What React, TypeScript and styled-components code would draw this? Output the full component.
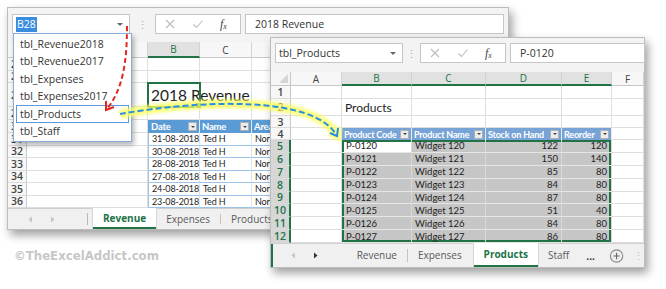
import React from "react";
import styled, { createGlobalStyle } from "styled-components";

const UI = '"Open Sans", "Liberation Sans", sans-serif';
const CELL = 'Lato, "Liberation Sans", sans-serif';
const GREEN = "#217346";

const dates = ["31-08-2018", "30-08-2018", "28-08-2018", "27-08-2018", "24-08-2018", "23-08-2018"];

const products = [
  ["P-0120", "Widget 120", "122", "120"],
  ["P-0121", "Widget 121", "150", "140"],
  ["P-0122", "Widget 122", "85", "80"],
  ["P-0123", "Widget 123", "84", "80"],
  ["P-0124", "Widget 124", "87", "80"],
  ["P-0125", "Widget 125", "51", "40"],
  ["P-0126", "Widget 126", "84", "80"],
  ["P-0127", "Widget 127", "86", "80"],
];

const names = ["tbl_Revenue2018", "tbl_Revenue2017", "tbl_Expenses", "tbl_Expenses2017", "tbl_Products", "tbl_Staff"];

const Blank = ({ count }: { count: number }) => (
  <>
    {Array.from({ length: count }, (_, i) => (
      <GridCell key={i} />
    ))}
  </>
);

const FormulaIcons = () => (
  <FxBox>
    <svg width="12" height="12" viewBox="0 0 12 12">
      <path d="M2 2 L10 10 M10 2 L2 10" stroke="#bcbcbc" strokeWidth="1.1" />
    </svg>
    <svg width="12" height="12" viewBox="0 0 12 12">
      <path d="M1.5 6.5 L4.5 9.5 L10.5 2.5" stroke="#bcbcbc" strokeWidth="1.1" fill="none" />
    </svg>
    <FxText>
      f<sub>x</sub>
    </FxText>
  </FxBox>
);

const NavArrows = ({ nextOn }: { nextOn?: boolean }) => (
  <>
    <svg width="5" height="7" viewBox="0 0 5 7">
      <path d="M4 0.5 L0.5 3.5 L4 6.5 Z" fill="#c4c4c4" />
    </svg>
    <svg width="5" height="7" viewBox="0 0 5 7">
      <path d="M1 0.5 L4.5 3.5 L1 6.5 Z" fill={nextOn ? "#333" : "#c4c4c4"} />
    </svg>
  </>
);

const App = () => {
  return (
    <Desktop>
      <GlobalStyle />

      <Window $x={7} $y={7} $w={502} $h={223} $z={1}>
        <FormulaBar $pt={6}>
          <NameBox $w={118}>
            <Picked>B28</Picked>
            <DropArrow />
          </NameBox>
          <Dots $w={25}>⋮</Dots>
          <FormulaIcons />
          <FormulaInput $w={259}>2018 Revenue</FormulaInput>
        </FormulaBar>

        <Sheet
          $cols="19px 121px 52px 52px 52px 1fr"
          $rows="16px 12.5px 12.5px 24px 13px 13px repeat(6, 12.5px)"
        >
          <Corner />
          <ColHead>A</ColHead>
          <ColHead $sel>B</ColHead>
          <ColHead>C</ColHead>
          <ColHead>D</ColHead>
          <ColHead>E</ColHead>

          <RowHead>26</RowHead>
          <Blank count={5} />
          <RowHead>27</RowHead>
          <Blank count={5} />
          <RowHead>28</RowHead>
          <GridCell />
          <TitleCell $size={15.5} $active>
            2018 Revenue
          </TitleCell>
          <Blank count={3} />
          <RowHead>29</RowHead>
          <Blank count={5} />
          <RowHead>30</RowHead>
          <GridCell />
          {["Date", "Name", "Area"].map((h, i) => (
            <HeadCell key={h} $first={i === 0}>
              {h}
              <FilterBtn />
            </HeadCell>
          ))}
          <GridCell />
          {dates.map((d, i) => (
            <React.Fragment key={d}>
              <RowHead>{31 + i}</RowHead>
              <GridCell />
              <BodyCell $first>{d}</BodyCell>
              <BodyCell>Ted H</BodyCell>
              <BodyCell>North</BodyCell>
              <GridCell />
            </React.Fragment>
          ))}
        </Sheet>

        <TabBar>
          <NavArea $w={80} $sep>
            <NavArrows />
          </NavArea>
          <Gap $w={5} />
          <Tab $active>Revenue</Tab>
          <Tab>Expenses</Tab>
          <TabSep />
          <Tab>Products</Tab>
        </TabBar>

        <NameList>
          {names.map((n) => (
            <NameItem key={n} $sel={n === "tbl_Products"}>
              {n}
            </NameItem>
          ))}
        </NameList>
      </Window>

      <Window $x={270} $y={37} $w={375} $h={231} $z={2}>
        <FormulaBar $pt={5}>
          <NameBox $w={128}>
            tbl_Products
            <DropArrow />
          </NameBox>
          <Dots $w={17}>⋮</Dots>
          <FormulaIcons />
          <FormulaInput>P-0120</FormulaInput>
        </FormulaBar>

        <Sheet
          $cols="20px 51px 70px 74px 76px 50px 1fr"
          $rows="14px 13px 17px 12px 12px repeat(8, 12.875px)"
        >
          <Corner $tri />
          <ColHead>A</ColHead>
          <ColHead $sel>B</ColHead>
          <ColHead $sel>C</ColHead>
          <ColHead $sel>D</ColHead>
          <ColHead $sel>E</ColHead>
          <ColHead>F</ColHead>

          <RowHead>1</RowHead>
          <Blank count={6} />
          <RowHead>2</RowHead>
          <GridCell />
          <TitleCell $size={12}>Products</TitleCell>
          <Blank count={4} />
          <RowHead>3</RowHead>
          <Blank count={6} />
          <RowHead>4</RowHead>
          <GridCell />
          {["Product Code", "Product Name", "Stock on Hand", "Reorder"].map((h) => (
            <HeadCell key={h} $soft>
              {h}
              <FilterBtn />
            </HeadCell>
          ))}
          <GridCell />
          {products.map((p, i) => (
            <React.Fragment key={p[0]}>
              <RowHead $sel>{5 + i}</RowHead>
              <GridCell />
              {p.map((v, c) => (
                <PickCell
                  key={c}
                  $active={i === 0 && c === 0}
                  $right={c > 1}
                  $top={i === 0}
                  $bottom={i === products.length - 1}
                  $left={c === 0}
                  $end={c === 3}
                >
                  {v}
                </PickCell>
              ))}
              <GridCell />
            </React.Fragment>
          ))}
        </Sheet>

        <TabBar $edge>
          <NavArea $w={79}>
            <NavArrows nextOn />
          </NavArea>
          <Tab>Revenue</Tab>
          <TabSep />
          <Tab>Expenses</Tab>
          <Gap $w={2} />
          <Tab $active>Products</Tab>
          <Tab>Staff</Tab>
          <More>...</More>
          <svg width="16" height="16" viewBox="0 0 16 16">
            <circle cx="8" cy="8" r="6.5" fill="none" stroke="#8a8a8a" strokeWidth="1.2" />
            <path d="M8 4.5 V11.5 M4.5 8 H11.5" stroke="#6a6a6a" strokeWidth="1.3" />
          </svg>
          <Kebab>⋮</Kebab>
        </TabBar>
      </Window>

      <Watermark>©TheExcelAddict.com</Watermark>

      <Arrows width="666" height="289" viewBox="0 0 666 289">
        <defs>
          <filter id="glow" x="-10%" y="-50%" width="120%" height="200%">
            <feGaussianBlur stdDeviation="1.6" />
          </filter>
        </defs>
        <g filter="url(#glow)" opacity="0.8">
          <path d="M120 114 C 200 100, 315 95, 337 136" stroke="#fbff5e" strokeWidth="9" fill="none" />
          <path d="M338 128 L337 136 L330 133" stroke="#fbff5e" strokeWidth="8" fill="none" />
        </g>
        <path
          d="M120 114 C 200 100, 315 95, 337 136"
          stroke="#2a8ee0"
          strokeWidth="2"
          strokeDasharray="6 3"
          fill="none"
        />
        <path d="M338 128 L337 136 L330 133" stroke="#2a8ee0" strokeWidth="2" fill="none" />
        <path
          d="M127 26 C 127 65, 122 90, 107 109"
          stroke="#e3261d"
          strokeWidth="2"
          strokeDasharray="5 3"
          fill="none"
        />
        <path d="M106 101 L106 110 L114 107" stroke="#e3261d" strokeWidth="2" fill="none" />
      </Arrows>
    </Desktop>
  );
};

const GlobalStyle = createGlobalStyle`
  html, body {
    margin: 0;
    padding: 0;
    background: #fff;
  }
  * {
    box-sizing: border-box;
  }
`;

const Desktop = styled.div`
  position: relative;
  width: 666px;
  height: 289px;
  overflow: hidden;
  background: #fff;
`;

interface WindowProps {
  $x: number;
  $y: number;
  $w: number;
  $h: number;
  $z: number;
}

const Window = styled.div<WindowProps>`
  position: absolute;
  left: ${(p) => p.$x}px;
  top: ${(p) => p.$y}px;
  width: ${(p) => p.$w}px;
  height: ${(p) => p.$h}px;
  z-index: ${(p) => p.$z};
  display: flex;
  flex-direction: column;
  background: #fff;
  border: 1px solid #bdbdbd;
  box-shadow: 3px 5px 9px rgba(0, 0, 0, 0.38);
`;

const FormulaBar = styled.div<{ $pt: number }>`
  height: 34px;
  flex-shrink: 0;
  display: flex;
  align-items: flex-start;
  padding: ${(p) => p.$pt}px 0 0 4px;
  background: #f3f3f3;
  font-family: ${UI};
  font-size: 10.5px;
  color: #333;
`;

const NameBox = styled.div<{ $w: number }>`
  width: ${(p) => p.$w}px;
  height: 20px;
  display: flex;
  align-items: center;
  padding: 0 6px 0 3px;
  background: #fff;
  border: 1px solid #c6c6c6;
`;

const Picked = styled.span`
  background: #3b8ddf;
  color: #fff;
  padding: 1px 1px;
  line-height: 13px;
`;

const DropArrow = styled.span`
  margin-left: auto;
  width: 0;
  height: 0;
  border-left: 3px solid transparent;
  border-right: 3px solid transparent;
  border-top: 3px solid #666;
`;

const Dots = styled.div<{ $w: number }>`
  width: ${(p) => p.$w}px;
  height: 20px;
  display: flex;
  align-items: center;
  justify-content: center;
  color: #a8a8a8;
  font-size: 11px;
`;

const FxBox = styled.div`
  width: 86px;
  height: 20px;
  display: flex;
  align-items: center;
  justify-content: space-between;
  padding: 0 8px;
  background: #fff;
  border: 1px solid #c6c6c6;
`;

const FxText = styled.span`
  width: 12px;
  font-family: "Liberation Serif", serif;
  font-style: italic;
  font-size: 12px;
  color: #444;
  line-height: 1;

  sub {
    font-size: 8px;
    vertical-align: -1px;
  }
`;

const FormulaInput = styled.div<{ $w?: number }>`
  ${(p) => (p.$w ? `width: ${p.$w}px;` : "flex: 1; margin-right: -1px;")}
  margin-left: 4px;
  height: 20px;
  display: flex;
  align-items: center;
  padding-left: 9px;
  background: #fff;
  border: 1px solid #c6c6c6;
`;

const Sheet = styled.div<{ $cols: string; $rows: string }>`
  display: grid;
  grid-template-columns: ${(p) => p.$cols};
  grid-template-rows: ${(p) => p.$rows};
  flex-shrink: 0;
  background: #fff;
  font-family: ${CELL};
  font-size: 9.5px;
  color: #1e1e1e;
`;

const GridCell = styled.div`
  min-width: 0;
  overflow: hidden;
  white-space: nowrap;
  display: flex;
  align-items: center;
  padding: 0 2px;
  border-right: 1px solid #dedede;
  border-bottom: 1px solid #dedede;
`;

const Corner = styled.div<{ $tri?: boolean }>`
  position: relative;
  background: #f6f6f6;
  border-right: 1px solid #c8c8c8;
  border-bottom: 1px solid #c8c8c8;

  &::after {
    content: "";
    display: ${(p) => (p.$tri ? "block" : "none")};
    position: absolute;
    right: 2px;
    bottom: 2px;
    border-left: 9px solid transparent;
    border-bottom: 9px solid #d6d6d6;
  }
`;

const ColHead = styled.div<{ $sel?: boolean }>`
  display: flex;
  align-items: center;
  justify-content: center;
  font-family: ${UI};
  font-size: 10px;
  background: ${(p) => (p.$sel ? "#e1e1e1" : "#f7f7f7")};
  color: ${(p) => (p.$sel ? GREEN : "#444")};
  border-right: 1px solid #d2d2d2;
  border-bottom: ${(p) => (p.$sel ? `2px solid ${GREEN}` : "1px solid #c8c8c8")};
`;

const RowHead = styled.div<{ $sel?: boolean }>`
  display: flex;
  align-items: center;
  justify-content: center;
  font-family: ${UI};
  font-size: 10.5px;
  font-weight: 600;
  background: ${(p) => (p.$sel ? "#d6d6d6" : "#f7f7f7")};
  color: ${(p) => (p.$sel ? GREEN : "#444")};
  border-right: ${(p) => (p.$sel ? `2px solid ${GREEN}` : "1px solid #c8c8c8")};
  border-bottom: 1px solid #dadada;
`;

const TitleCell = styled(GridCell)<{ $size: number; $active?: boolean }>`
  position: relative;
  overflow: visible;
  font-size: ${(p) => p.$size}px;
  padding-left: 3px;
  ${(p) => (p.$active ? `outline: 2px solid ${GREEN}; outline-offset: -1px;` : "")}

  &::after {
    content: "";
    display: ${(p) => (p.$active ? "block" : "none")};
    position: absolute;
    right: -3px;
    bottom: -3px;
    width: 5px;
    height: 5px;
    background: ${GREEN};
    border: 1px solid #fff;
  }
`;

const HeadCell = styled(GridCell)<{ $first?: boolean; $soft?: boolean }>`
  background: ${(p) => (p.$soft ? "#77a3d6" : "#5b9bd5")};
  color: #fff;
  font-weight: 700;
  font-size: ${(p) => (p.$soft ? 9 : 9.5)}px;
  letter-spacing: -0.2px;
  border-right: 1px solid #e3ecf6;
  border-bottom: none;
  ${(p) => (p.$first ? "border-left: 1px solid #5b9bd5;" : "")}
`;

const FilterBtn = styled.span`
  margin-left: auto;
  flex-shrink: 0;
  width: 9px;
  height: 9px;
  display: flex;
  align-items: center;
  justify-content: center;
  background: #ececec;
  border: 1px solid #b0b0b0;

  &::after {
    content: "";
    border-left: 2px solid transparent;
    border-right: 2px solid transparent;
    border-top: 2px solid #444;
  }
`;

const BodyCell = styled(GridCell)<{ $first?: boolean }>`
  padding-left: 3px;
  font-size: 9px;
  letter-spacing: -0.15px;
  border-right: 1px solid #d6e5f4;
  border-bottom: 1px solid #9dc3e6;
  ${(p) => (p.$first ? "border-left: 1px solid #9dc3e6;" : "")}
`;

interface PickProps {
  $active?: boolean;
  $right?: boolean;
  $top?: boolean;
  $bottom?: boolean;
  $left?: boolean;
  $end?: boolean;
}

const frame = (p: PickProps) => {
  const s: string[] = [];
  if (p.$top) s.push(`inset 0 2px 0 ${GREEN}`);
  if (p.$bottom) s.push(`inset 0 -2px 0 ${GREEN}`);
  if (p.$left) s.push(`inset 2px 0 0 ${GREEN}`);
  if (p.$end) s.push(`inset -2px 0 0 ${GREEN}`);
  return s.length ? `box-shadow: ${s.join(", ")};` : "";
};

const PickCell = styled(GridCell)<PickProps>`
  background: ${(p) => (p.$active ? "#fff" : "#c6c6c6")};
  justify-content: ${(p) => (p.$right ? "flex-end" : "flex-start")};
  padding: 0 ${(p) => (p.$end ? 4 : 3)}px 0 ${(p) => (p.$left ? 4 : 3)}px;
  border-right: 1px solid #d8d8d8;
  border-bottom: 1px solid #e6e6e6;
  ${frame}
`;

const TabBar = styled.div<{ $edge?: boolean }>`
  flex: 1;
  display: flex;
  align-items: stretch;
  background: #f0f0f0;
  border-top: 1px solid #d0d0d0;
  ${(p) => (p.$edge ? `box-shadow: inset 2px 0 0 ${GREEN};` : "")}
  font-family: ${UI};
  font-size: 10px;
  color: #5a5a5a;

  & > svg {
    align-self: center;
    margin-left: 14px;
  }
`;

const NavArea = styled.div<{ $w: number; $sep?: boolean }>`
  width: ${(p) => p.$w}px;
  display: flex;
  align-items: center;
  gap: 17px;
  padding-left: 20px;
  ${(p) => (p.$sep ? "border-right: 1px solid #b8b8b8; margin: 4px 0;" : "")}
`;

const Gap = styled.div<{ $w: number }>`
  width: ${(p) => p.$w}px;
`;

const Tab = styled.div<{ $active?: boolean }>`
  display: flex;
  align-items: center;
  padding: 0 10px;
  margin-top: -1px;
  ${(p) =>
    p.$active
      ? `background: #fff;
         color: ${GREEN};
         font-weight: 700;
         border-bottom: 2px solid ${GREEN};
         box-shadow: 1px 0 0 #d8d8d8, -1px 0 0 #d8d8d8;`
      : ""}
`;

const TabSep = styled.div`
  width: 1px;
  margin: 5px 0;
  background: #c4c4c4;
`;

const More = styled.div`
  display: flex;
  align-items: center;
  margin-left: 7px;
  font-weight: 700;
  color: #333;
`;

const Kebab = styled.div`
  display: flex;
  align-items: center;
  margin-left: 9px;
  color: #c0c0c0;
  font-size: 11px;
`;

const NameList = styled.div`
  position: absolute;
  left: 5px;
  top: 25px;
  width: 119px;
  height: 109px;
  padding-top: 1px;
  background: #fff;
  border: 1px solid #86acdc;
  box-shadow: 2px 3px 5px rgba(0, 0, 0, 0.3);
  font-family: ${UI};
  font-size: 10.5px;
  color: #333;
  z-index: 5;
`;

const NameItem = styled.div<{ $sel?: boolean }>`
  height: 17.5px;
  display: flex;
  align-items: center;
  margin: 0 2px;
  padding-left: 3px;
  border: 1px solid ${(p) => (p.$sel ? "#5f9ad8" : "transparent")};
`;

const Watermark = styled.div`
  position: absolute;
  left: 14px;
  top: 249px;
  font-family: "DejaVu Sans", Verdana, sans-serif;
  font-weight: 700;
  font-size: 11.75px;
  color: #c7c7c7;
`;

const Arrows = styled.svg`
  position: absolute;
  left: 0;
  top: 0;
  z-index: 10;
  pointer-events: none;
`;

export default App;
